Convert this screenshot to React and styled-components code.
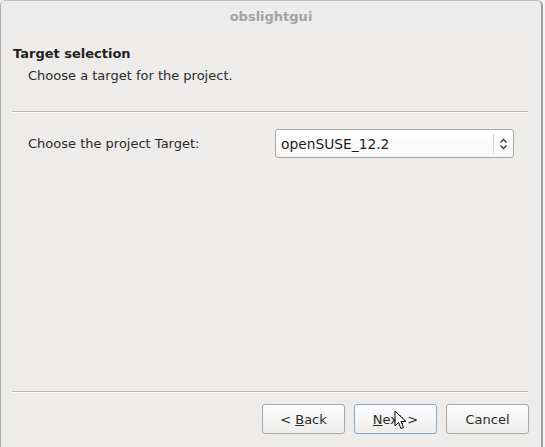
import React from "react";
import styled, { createGlobalStyle } from "styled-components";

const GlobalStyle = createGlobalStyle`
  html, body {
    margin: 0;
    padding: 0;
    background: #f4f4f4;
  }
  body {
    font-family: "DejaVu Sans", "Liberation Sans", sans-serif;
    font-size: 13px;
    color: #2e3436;
  }
`;

const Window = styled.div`
  width: 543px;
  height: 447px;
  box-sizing: border-box;
  border-left: 1px solid #a9a9a9;
  border-right: 2px solid #9c9c9c;
  border-top: 1px solid #bdbdbd;
  border-radius: 6px 6px 0 0;
  background: #edecea;
  display: flex;
  flex-direction: column;
  overflow: hidden;
`;

const TitleBar = styled.div`
  height: 32px;
  display: flex;
  align-items: center;
  justify-content: center;
  background: #ececec;
  color: #a3a3a3;
  font-weight: bold;
  font-size: 13px;
  padding-bottom: 2px;
  box-sizing: border-box;
`;

const Header = styled.div`
  padding: 12px 12px 0 12px;
  height: 78px;
  box-sizing: border-box;
`;

const Heading = styled.div`
  font-weight: bold;
  font-size: 13px;
  color: #1f1f1f;
  line-height: 17px;
`;

const SubHeading = styled.div`
  margin-top: 5px;
  padding-left: 15px;
  color: #2a2a2a;
  line-height: 17px;
`;

const Separator = styled.div`
  margin: 0 13px 0 11px;
  height: 1px;
  background: #b9b8b6;
  border-bottom: 1px solid #ffffff;
`;

const Body = styled.div`
  flex: 1;
  padding: 16px 27px 0 27px;
`;

const FieldRow = styled.div`
  display: flex;
  align-items: center;
  justify-content: space-between;
`;

const Label = styled.span`
  color: #2a2a2a;
`;

const Combo = styled.div`
  width: 239px;
  height: 29px;
  box-sizing: border-box;
  border: 1px solid #a8a8a6;
  border-radius: 3px;
  background: linear-gradient(#ffffff, #f7f7f7);
  display: flex;
  align-items: center;
`;

const ComboText = styled.span`
  flex: 1;
  padding-left: 5px;
  font-size: 13.8px;
  color: #1e1e1e;
`;

const ComboArrow = styled.span`
  width: 19px;
  height: 19px;
  border-left: 1px solid #cfcfcf;
  display: flex;
  align-items: center;
  justify-content: center;
`;

const Footer = styled.div`
  height: 54px;
  display: flex;
  justify-content: flex-end;
  align-items: flex-start;
  gap: 9px;
  padding: 11px 12px 0 0;
  box-sizing: border-box;
`;

const Button = styled.button`
  width: 83px;
  height: 30px;
  box-sizing: border-box;
  border: 1px solid ${(p) => (p.$focused ? "#8aa6c4" : "#a7a7a5")};
  border-radius: 3px;
  background: linear-gradient(#fdfdfd, #ededec);
  font-family: "DejaVu Sans", "Liberation Sans", sans-serif;
  font-size: 13px;
  color: #2a2a2a;
  padding: 0;
  box-shadow: inset 0 1px 0 #ffffff;
`;

const Mnemonic = styled.span`
  text-decoration: underline;
`;

const Cursor = styled.svg`
  position: absolute;
  left: 394px;
  top: 410px;
`;

export default function App() {
  return (
    <>
      <GlobalStyle />
      <Window>
        <TitleBar>obslightgui</TitleBar>
        <Header>
          <Heading>Target selection</Heading>
          <SubHeading>Choose a target for the project.</SubHeading>
        </Header>
        <Separator />
        <Body>
          <FieldRow>
            <Label>Choose the project Target:</Label>
            <Combo>
              <ComboText>openSUSE_12.2</ComboText>
              <ComboArrow>
                <svg width="9" height="12" viewBox="0 0 9 12">
                  <path d="M1.5 4.5 L4.5 1.5 L7.5 4.5 M1.5 7.5 L4.5 10.5 L7.5 7.5" fill="none" stroke="#333" strokeWidth="1.3" />
                </svg>
              </ComboArrow>
            </Combo>
          </FieldRow>
        </Body>
        <Separator />
        <Footer>
          <Button>
            &lt; <Mnemonic>B</Mnemonic>ack
          </Button>
          <Button $focused>
            <Mnemonic>N</Mnemonic>ext &gt;
          </Button>
          <Button>Cancel</Button>
        </Footer>
      </Window>
      <Cursor width="13" height="20" viewBox="0 0 13 20">
        <path d="M1 1 L1 16 L4.5 12.5 L7 18.5 L9.5 17.5 L7 11.5 L12 11.5 Z" fill="#ffffff" stroke="#000" strokeWidth="1" strokeLinejoin="round" />
      </Cursor>
    </>
  );
}
